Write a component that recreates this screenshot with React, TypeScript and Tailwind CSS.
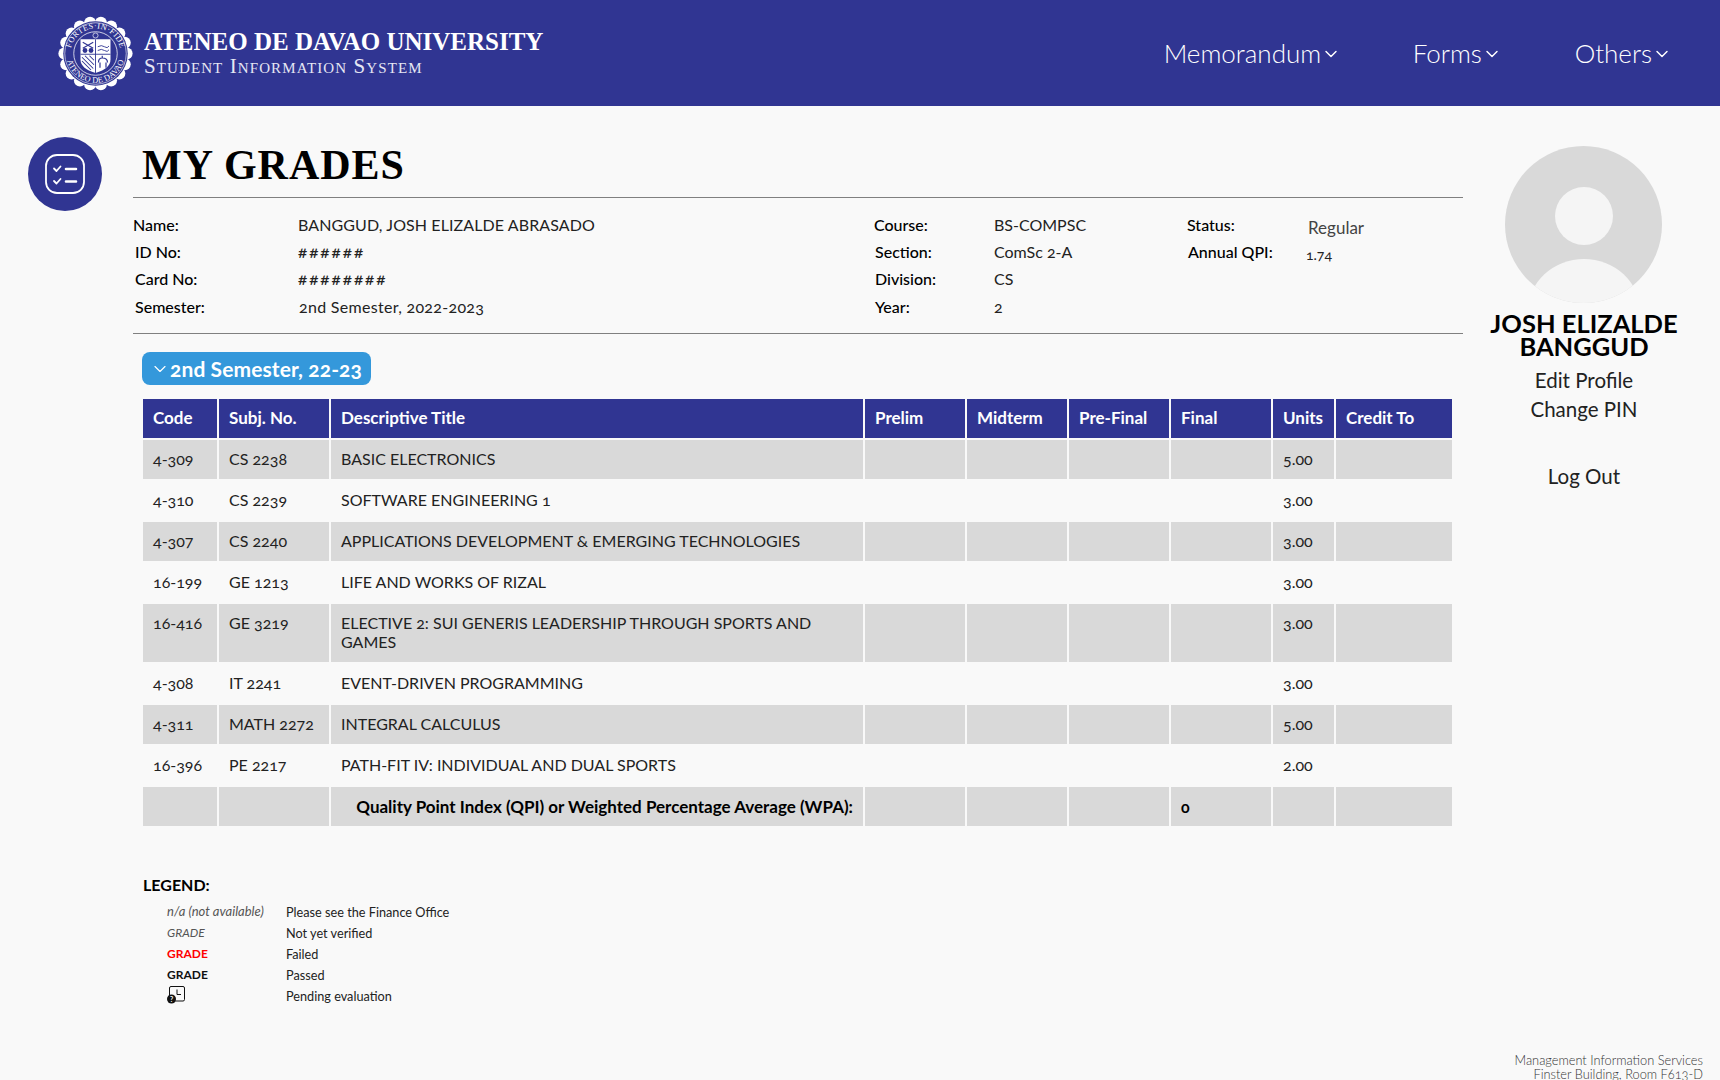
import { ChevronDown } from "lucide-react";

const courses = [
  { code: "4-309", subj: "CS 2238", title: "BASIC ELECTRONICS", units: "5.00" },
  { code: "4-310", subj: "CS 2239", title: "SOFTWARE ENGINEERING 1", units: "3.00" },
  { code: "4-307", subj: "CS 2240", title: "APPLICATIONS DEVELOPMENT & EMERGING TECHNOLOGIES", units: "3.00" },
  { code: "16-199", subj: "GE 1213", title: "LIFE AND WORKS OF RIZAL", units: "3.00" },
  { code: "16-416", subj: "GE 3219", title: "ELECTIVE 2: SUI GENERIS LEADERSHIP THROUGH SPORTS AND GAMES", units: "3.00" },
  { code: "4-308", subj: "IT 2241", title: "EVENT-DRIVEN PROGRAMMING", units: "3.00" },
  { code: "4-311", subj: "MATH 2272", title: "INTEGRAL CALCULUS", units: "5.00" },
  { code: "16-396", subj: "PE 2217", title: "PATH-FIT IV: INDIVIDUAL AND DUAL SPORTS", units: "2.00" },
];

const headers = ["Code", "Subj. No.", "Descriptive Title", "Prelim", "Midterm", "Pre-Final", "Final", "Units", "Credit To"];

const scallop = Array.from({ length: 18 }, (_, i) => {
  const a = (i / 18) * Math.PI * 2;
  return { x: 50 + 41.5 * Math.cos(a), y: 50 + 41.5 * Math.sin(a) };
});

function Seal() {
  return (
    <svg viewBox="0 0 100 100" className="h-[75px] w-[75px] shrink-0">
      <defs>
        <path id="sealTop" d="M 17 56 A 33.5 33.5 0 1 1 83 56" />
        <path id="sealBottom" d="M 11 50 A 39 39 0 0 0 89 50" />
      </defs>
      <circle cx="50" cy="50" r="43" fill="#fff" />
      {scallop.map((p, i) => (
        <circle key={i} cx={p.x} cy={p.y} r="8" fill="#fff" />
      ))}
      <circle cx="50" cy="50" r="43" fill="#303592" />
      <circle cx="50" cy="50" r="41" fill="none" stroke="#fff" strokeWidth="0.8" />
      <circle cx="50" cy="50" r="29" fill="none" stroke="#fff" strokeWidth="1" />
      <text fill="#fff" fontSize="11" fontFamily="'Liberation Serif', serif" letterSpacing="0.5">
        <textPath href="#sealTop" startOffset="50%" textAnchor="middle">FORTES·IN·FIDE</textPath>
      </text>
      <text fill="#fff" fontSize="11" fontFamily="'Liberation Serif', serif" letterSpacing="0.2">
        <textPath href="#sealBottom" startOffset="50%" textAnchor="middle">ATENEO DE DAVAO</textPath>
      </text>
      <circle cx="50" cy="26" r="3.4" fill="none" stroke="#fff" strokeWidth="0.9" />
      <path d="M30 31 H70 V58 Q70 70 50 76 Q30 70 30 58 Z" fill="#fff" />
      <path d="M50 31 V76 M30 51 H70" stroke="#303592" strokeWidth="1.2" />
      <circle cx="36" cy="46" r="3.2" fill="#303592" />
      <circle cx="44" cy="46" r="3.2" fill="#303592" />
      <path d="M33 35 L47 43 M47 35 L33 43" stroke="#303592" strokeWidth="1.5" />
      <path d="M32 55 L47 70 M32 60 L44 72 M36 53 L48 65 M42 53 L48 59" stroke="#303592" strokeWidth="1.4" />
      <path d="M53 41 Q58 38 62 41 T68 40 M53 46 Q58 43 62 46 T68 45" stroke="#303592" strokeWidth="1.2" fill="none" />
      <path d="M54 62 Q54 56 59 56 Q66 56 66 62 M56 62 V69 M64 62 V69 M59 56 V53" stroke="#303592" strokeWidth="1.6" fill="none" />
    </svg>
  );
}

function ChecklistIcon() {
  return (
    <svg viewBox="0 0 40 40" className="h-10 w-10" fill="none" stroke="#fff" strokeLinecap="round" strokeLinejoin="round">
      <rect x="1" y="1" width="38" height="38" rx="11" strokeWidth="1.8" />
      <path d="M9 14.5 L11.5 17 L15.5 12.5 M9 27 L11.5 29.5 L15.5 25" strokeWidth="1.8" />
      <path d="M21 15 H31 M21 27.5 H31" strokeWidth="2.6" />
    </svg>
  );
}

function Avatar() {
  return (
    <svg viewBox="0 0 157 157" className="h-[157px] w-[157px]">
      <defs>
        <clipPath id="avatarClip">
          <circle cx="78.5" cy="78.5" r="78.5" />
        </clipPath>
      </defs>
      <circle cx="78.5" cy="78.5" r="78.5" fill="#d9d9d9" />
      <circle cx="79" cy="70" r="29" fill="#f5f5f5" />
      <ellipse cx="79" cy="165" rx="56" ry="52" fill="#f5f5f5" clipPath="url(#avatarClip)" />
    </svg>
  );
}

function PendingIcon() {
  return (
    <svg viewBox="0 0 18 18" className="h-[18px] w-[18px]">
      <rect x="2.5" y="0.5" width="15" height="14.5" rx="1.5" fill="none" stroke="#111" strokeWidth="1" />
      <path d="M10 3.5 V8.5 H14" fill="none" stroke="#111" strokeWidth="1" />
      <circle cx="4.5" cy="13" r="4.5" fill="#111" />
      <text x="4.5" y="15.5" textAnchor="middle" fontSize="7" fontWeight="700" fill="#fff">?</text>
    </svg>
  );
}

function NavItem({ label, className }: { label: string; className: string }) {
  return (
    <div className={`flex items-center ${className}`}>
      <span className="text-[26px] font-light">{label}</span>
      <ChevronDown size={20} strokeWidth={1.75} className="mt-[1px]" />
    </div>
  );
}

function InfoRow({ label, value, labelClass, valueClass }: { label: string; value: string; labelClass: string; valueClass: string }) {
  return (
    <div className="flex h-[27.3px] items-center">
      <div className={`font-medium text-black ${labelClass}`}>{label}</div>
      <div className={`text-[#222] ${valueClass}`}>{value}</div>
    </div>
  );
}

export default function App() {
  return (
    <div className="h-[1080px] overflow-hidden bg-[#f9f9f9] font-['Lato',sans-serif] text-[#222] [font-feature-settings:'onum']">
      <header className="flex h-[106px] items-center justify-between bg-[#303592] pl-[58px] pr-[48px] text-white">
        <div className="flex items-center gap-[11px]">
          <Seal />
          <div className="mb-[2px] font-['Liberation_Serif',serif]">
            <div className="text-[25px] font-bold leading-[29px]">ATENEO DE DAVAO UNIVERSITY</div>
            <div className="text-[21px] leading-[21px] tracking-[1.1px] text-[#e6e7f4] [font-variant:small-caps]">Student Information System</div>
          </div>
        </div>
        <nav className="flex items-center">
          <NavItem label="Memorandum" className="w-[249px]" />
          <NavItem label="Forms" className="w-[162px]" />
          <NavItem label="Others" className="" />
        </nav>
      </header>

      <div className="flex">
        <div className="w-[133px] shrink-0 pl-[28px] pt-[31px]">
          <div className="flex h-[74px] w-[74px] items-center justify-center rounded-full bg-[#303592]">
            <ChecklistIcon />
          </div>
        </div>

        <main className="w-[1330px] shrink-0">
          <div className="flex h-[92px] items-end border-b border-[#808080] pb-[6px] pl-[9px]">
            <h1 className="font-['Liberation_Serif',serif] text-[42px] font-bold leading-[52px] tracking-[1px] text-black">MY GRADES</h1>
          </div>

          <div className="flex h-[136px] items-start border-b border-[#808080] pt-[13px] text-[16px]">
            <div className="w-[741px]">
              <InfoRow label="Name:" value="BANGGUD, JOSH ELIZALDE ABRASADO" labelClass="w-[165px]" valueClass="tracking-[0.1px]" />
              <InfoRow label="ID No:" value="######" labelClass="w-[165px] pl-[2px]" valueClass="text-[17px] tracking-[2px]" />
              <InfoRow label="Card No:" value="########" labelClass="w-[165px] pl-[2px]" valueClass="text-[17px] tracking-[2px]" />
              <InfoRow label="Semester:" value="2nd Semester, 2022-2023" labelClass="w-[166px] pl-[2px]" valueClass="tracking-[0.3px]" />
            </div>
            <div className="w-[313px]">
              <InfoRow label="Course:" value="BS-COMPSC" labelClass="w-[120px]" valueClass="" />
              <InfoRow label="Section:" value="ComSc 2-A" labelClass="w-[120px] pl-[1px]" valueClass="" />
              <InfoRow label="Division:" value="CS" labelClass="w-[120px] pl-[1px]" valueClass="" />
              <InfoRow label="Year:" value="2" labelClass="w-[120px] pl-[1px]" valueClass="" />
            </div>
            <div>
              <InfoRow label="Status:" value="Regular" labelClass="w-[121px]" valueClass="mt-[6px] text-[17px] text-[#444]" />
              <InfoRow label="Annual QPI:" value="1.74" labelClass="w-[119px] pl-[1px]" valueClass="mt-[6px] text-[14px]" />
            </div>
          </div>

          <div className="ml-[9px] mt-[18px] flex h-[33px] w-[229px] items-center rounded-[8px] bg-[#3498db] pl-[8px] text-[21px] font-bold tracking-[0.1px] text-white">
            <ChevronDown size={20} strokeWidth={1.4} />
            <span>2nd Semester, 22-23</span>
          </div>

          <table className="ml-[8px] mt-[12px] w-[1313px] table-fixed border-separate border-spacing-[2px] text-[16px]">
            <colgroup>
              <col className="w-[74px]" />
              <col className="w-[110px]" />
              <col className="w-[532px]" />
              <col className="w-[100px]" />
              <col className="w-[100px]" />
              <col className="w-[100px]" />
              <col className="w-[100px]" />
              <col className="w-[61px]" />
              <col className="w-[116px]" />
            </colgroup>
            <thead>
              <tr>
                {headers.map((h) => (
                  <th key={h} className="h-[39px] bg-[#303592] px-[10px] pb-[1px] text-left text-[17px] font-bold text-white">{h}</th>
                ))}
              </tr>
            </thead>
            <tbody>
              {courses.map((c, i) => {
                const bg = i % 2 === 0 ? "bg-[#d9d9d9]" : "";
                const cell = `${bg} h-[39px] px-[10px] pt-[9px] pb-[11px] align-top leading-[19px]`;
                return (
                  <tr key={c.code}>
                    <td className={cell}>{c.code}</td>
                    <td className={cell}>{c.subj}</td>
                    <td className={cell}>{c.title}</td>
                    <td className={cell}></td>
                    <td className={cell}></td>
                    <td className={cell}></td>
                    <td className={cell}></td>
                    <td className={cell}>{c.units}</td>
                    <td className={cell}></td>
                  </tr>
                );
              })}
              <tr className="[&>td]:h-[39px] [&>td]:bg-[#d9d9d9] [&>td]:px-[10px] [&>td]:font-bold [&>td]:text-black">
                <td></td>
                <td></td>
                <td className="whitespace-nowrap text-right text-[17px]">Quality Point Index (QPI) or Weighted Percentage Average (WPA):</td>
                <td></td>
                <td></td>
                <td></td>
                <td>0</td>
                <td></td>
                <td></td>
              </tr>
            </tbody>
          </table>

          <div className="ml-[10px] mt-[47px] text-[16px] font-bold leading-[20px] text-black">LEGEND:</div>
          <div className="ml-[34px] mt-[6px] grid auto-rows-[21px] grid-cols-[119px_1fr] text-[12.7px] leading-[21px]">
            <div className="text-[13px] italic text-[#555]">n/a (not available)</div>
            <div className="pt-[1px]">Please see the Finance Office</div>
            <div className="text-[12px] italic text-[#555]">GRADE</div>
            <div className="pt-[1px]">Not yet verified</div>
            <div className="text-[12px] font-bold text-[#ff0000]">GRADE</div>
            <div className="pt-[1px]">Failed</div>
            <div className="text-[12px] font-bold text-[#111]">GRADE</div>
            <div className="pt-[1px]">Passed</div>
            <div className="pt-[1px]"><PendingIcon /></div>
            <div className="pt-[1px]">Pending evaluation</div>
          </div>
        </main>

        <aside className="relative h-[974px] w-[242px] shrink-0 pt-[40px] text-center">
          <div className="flex justify-center pr-[2px]"><Avatar /></div>
          <div className="mt-[9px] text-[25.5px] font-bold leading-[23px] text-black">JOSH ELIZALDE<br />BANGGUD</div>
          <div className="mt-[8px] text-[20.5px] leading-[29px]">Edit Profile</div>
          <div className="text-[20.5px] leading-[29px]">Change PIN</div>
          <div className="mt-[38px] text-[20.5px] leading-[29px]">Log Out</div>
          <div className="absolute bottom-[-1px] right-[2px] whitespace-nowrap text-right text-[12.8px] font-light leading-[14px] text-[#333]">
            Management Information Services<br />Finster Building, Room F613-D
          </div>
        </aside>
      </div>
    </div>
  );
}
